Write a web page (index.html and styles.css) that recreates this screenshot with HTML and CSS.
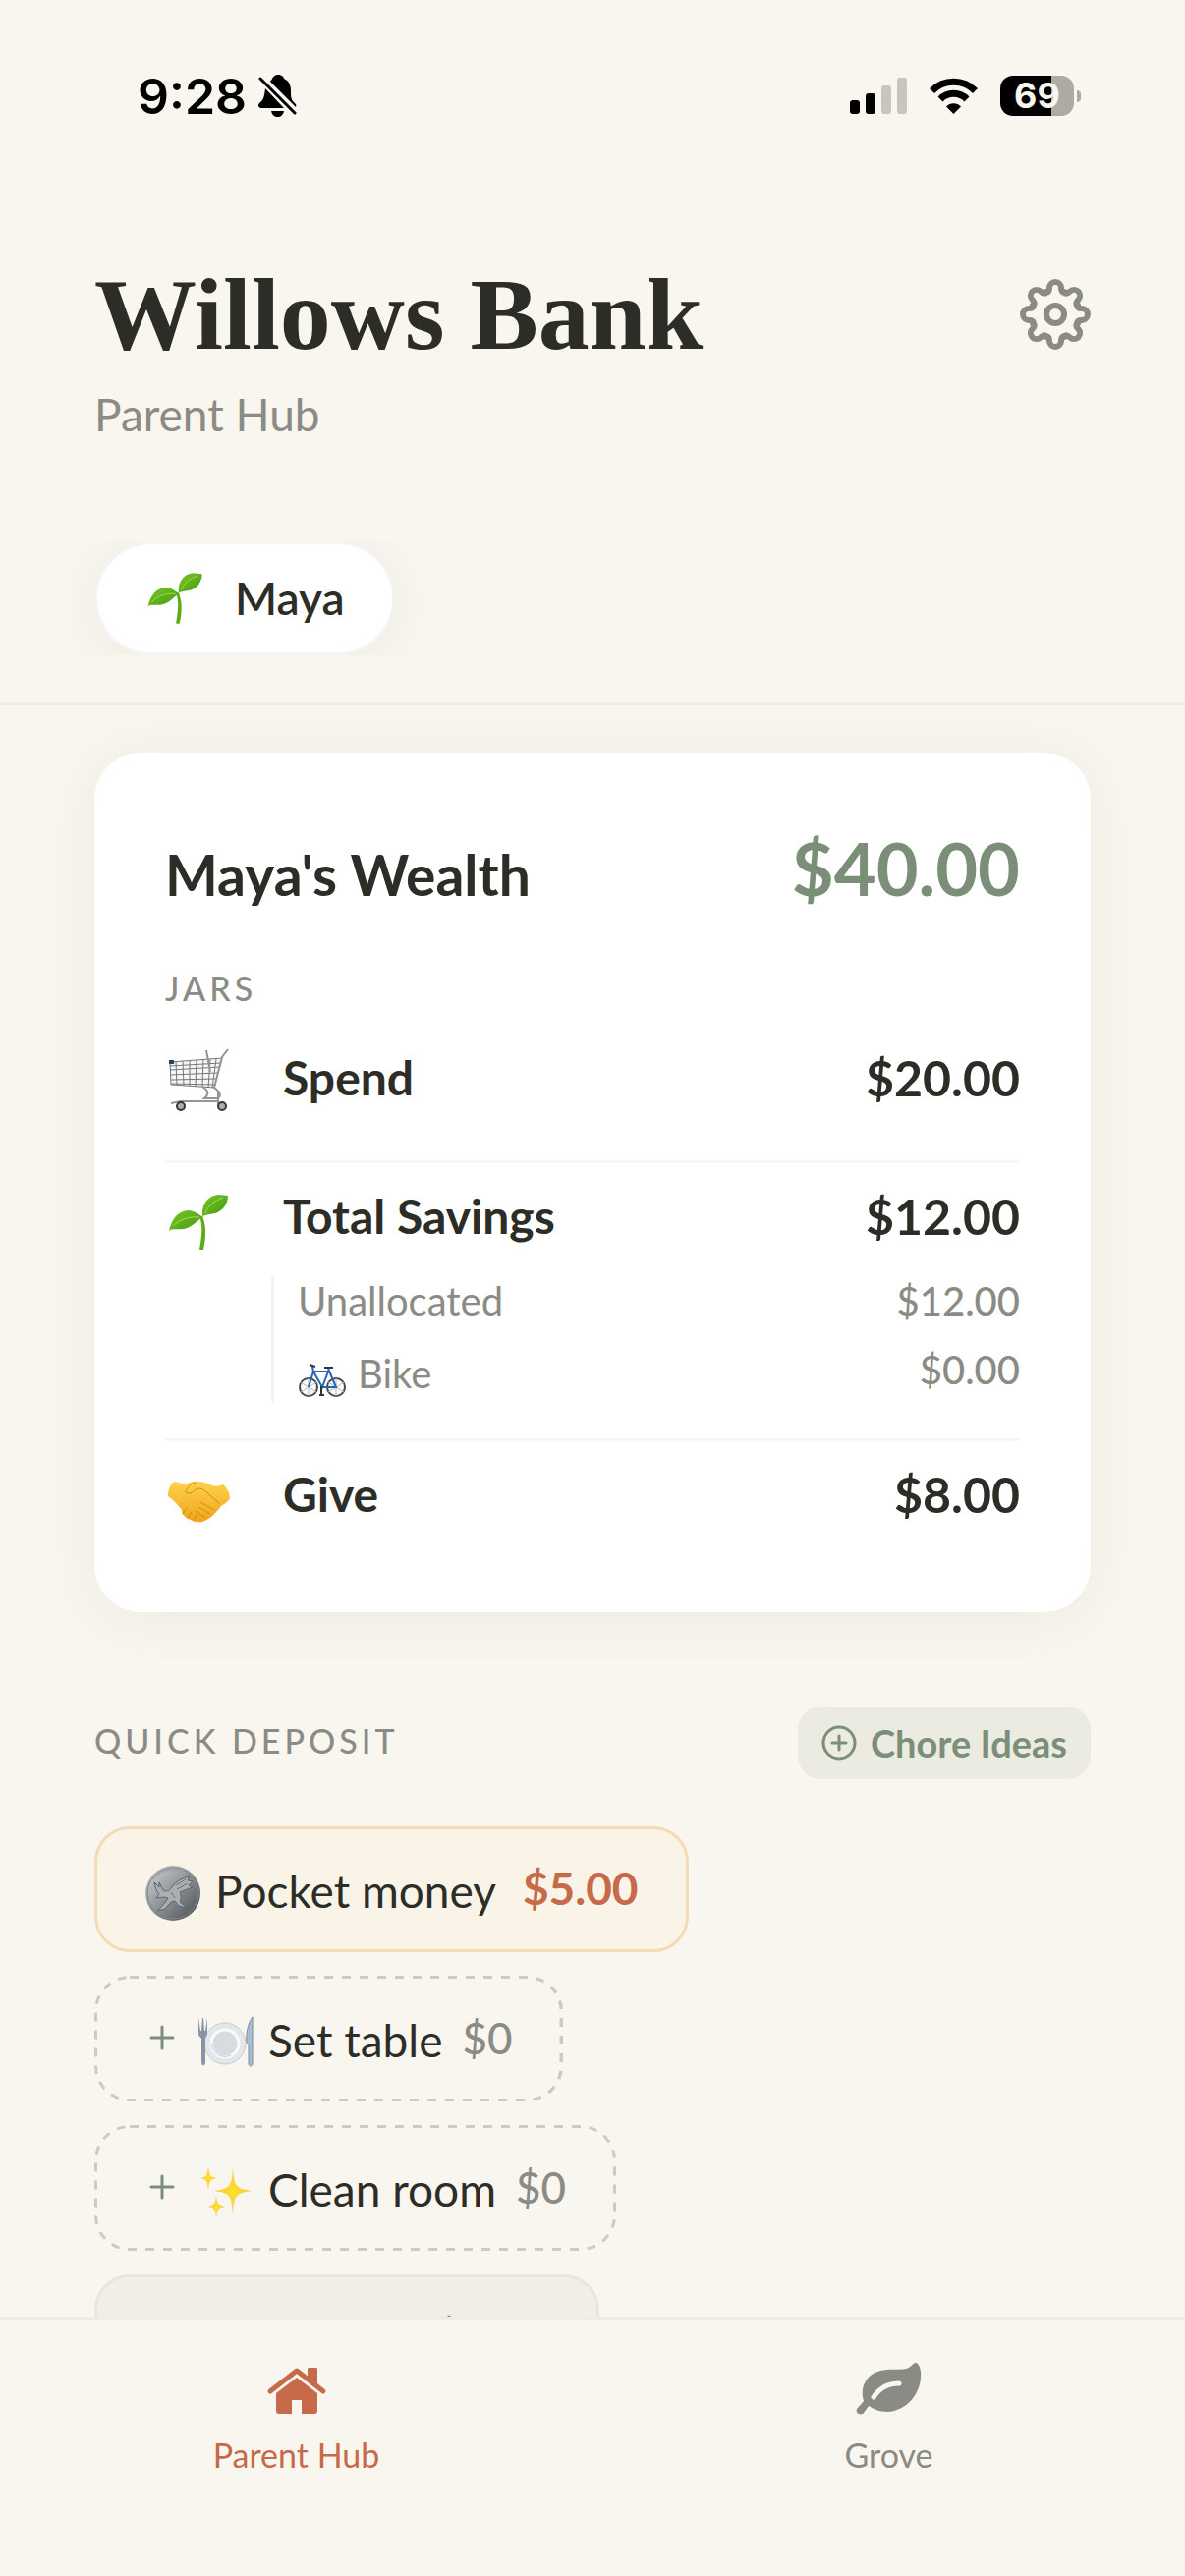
FILE: index.html
```html
<!DOCTYPE html>
<html lang="en">
<head>
<meta charset="utf-8">
<meta name="viewport" content="width=device-width, initial-scale=1">
<title>Willows Bank</title>
<link rel="stylesheet" href="styles.css">
</head>
<body>
<svg class="sprite" aria-hidden="true">
  <defs>
    <linearGradient id="leaf-green" x1="0" y1="0" x2="1" y2="1">
      <stop offset="0" stop-color="#7cc62a"/><stop offset="1" stop-color="#3f9a0c"/>
    </linearGradient>
    <linearGradient id="hand-gold" x1="0" y1="0" x2="0" y2="1">
      <stop offset="0" stop-color="#ffd24a"/><stop offset="1" stop-color="#efa41c"/>
    </linearGradient>
    <linearGradient id="coin-silver" x1="0" y1="0" x2="1" y2="1">
      <stop offset="0" stop-color="#d3d8da"/><stop offset="0.5" stop-color="#8c9295"/><stop offset="1" stop-color="#43484b"/>
    </linearGradient>
    <radialGradient id="spark-gold">
      <stop offset="0" stop-color="#ffe02e"/><stop offset="0.6" stop-color="#ffcf3a"/><stop offset="1" stop-color="#fbb05a"/>
    </radialGradient>
    <symbol id="sprout" viewBox="0 0 72 72">
      <path d="M4 45C7 32 13 25 23 24C30 24 34 28 39 31C33 33 29 41 19 43C12 44 7 42 4 45Z" fill="url(#leaf-green)"/>
      <path d="M38 30C37 17 44 9 54 8L64 9C64 18 58 25 51 27C45 28 40 29 38 30Z" fill="url(#leaf-green)"/>
      <path d="M38 30C42 40 42 50 39 64H35C37 52 39 40 35 30Z" fill="#5aad17"/>
      <path d="M8 40C15 33 24 30 35 31M41 27C44 19 50 14 59 11" fill="none" stroke="#a5dc55" stroke-width="1"/>
    </symbol>
  </defs>
</svg>
<div class="app">
  <div class="status">
    <div class="status-left">
      <span class="clock">9:28</span>
      <svg class="bell" viewBox="0 0 40 43" aria-label="Silent mode">
        <path d="M20 0C23 0 26 2 26 4C31 6 33 11 33 16C33 22 33 25 36 28C38 30 39 31 38 33L12 7C13 5 14 5 14 4C15 2 17 0 20 0Z"/>
        <path d="M7 14L26 34H3C0 34 -1 31 1 29C5 26 6 23 7 14Z"/>
        <path d="M13 37H26C25 41 23 43 20 43C16 43 14 41 13 37Z"/>
        <path d="M2 4L37 39" stroke="#000" stroke-width="3" stroke-linecap="round"/>
      </svg>
    </div>
    <div class="status-right">
      <svg class="signal" viewBox="0 0 58 37" aria-label="Signal">
        <rect x="0" y="23" width="10" height="14" rx="3"/>
        <rect x="16" y="16" width="10" height="21" rx="3"/>
        <rect x="32" y="8" width="10" height="29" rx="3" fill="#c8c5bf"/>
        <rect x="48" y="0" width="10" height="37" rx="3" fill="#c8c5bf"/>
      </svg>
      <svg class="wifi" viewBox="0 0 50 37" aria-label="Wi-Fi">
        <path d="M3 13.500A31 31 0 0 1 47 13.500" fill="none" stroke="#000" stroke-width="7"/>
        <path d="M11.500 22A19 19 0 0 1 38.500 22" fill="none" stroke="#000" stroke-width="7"/>
        <path d="M17.500 29.500C21 25 29 25 32.500 29.500L25 37Z"/>
      </svg>
      <div class="battery"><span class="battery-level">69</span><span class="battery-tip"></span></div>
    </div>
  </div>

  <header class="header">
    <div class="title-row">
      <h1 class="title">Willows Bank</h1>
      <button class="icon-button" type="button" aria-label="Settings">
        <svg class="gear" viewBox="0 0 72 72">
          <defs><path id="tooth" d="M26.600 13.300C28.900 14.200 30 12 30 9A6 6 0 0 1 42 9C42 12 43.100 14.200 45.400 13.300"/></defs>
          <g fill="none" stroke="#8a8b84" stroke-width="6" stroke-linecap="round">
            <use href="#tooth"/><use href="#tooth" transform="rotate(45 36 36)"/>
            <use href="#tooth" transform="rotate(90 36 36)"/><use href="#tooth" transform="rotate(135 36 36)"/>
            <use href="#tooth" transform="rotate(180 36 36)"/><use href="#tooth" transform="rotate(225 36 36)"/>
            <use href="#tooth" transform="rotate(270 36 36)"/><use href="#tooth" transform="rotate(315 36 36)"/>
            <circle cx="36" cy="36" r="9"/>
          </g>
        </svg>
      </button>
    </div>
    <p class="subtitle">Parent Hub</p>
    <div class="children">
      <button class="child" type="button"><svg class="child-icon"><use href="#sprout"/></svg>Maya</button>
    </div>
  </header>

  <main class="content">
    <section class="card">
      <div class="card-head">
        <h2 class="card-title">Maya's Wealth</h2>
        <span class="total">$40.00</span>
      </div>
      <h3 class="label">JARS</h3>
      <ul class="jars">
        <li class="jar">
          <div class="jar-row">
            <svg class="jar-icon" viewBox="0 0 72 72" aria-hidden="true">
              <g fill="none" stroke="#77787b" stroke-width="1">
                <path d="M5 14L58 10L50 40L6 37Z" fill="#f6f6f7"/>
                <path d="M5 18L57 15M5 22L56 19M5 27L54 25M6 32L52 31M6 36L51 37M11 14L12 37M18 13L19 38M25 12L25 38M32 12L31 39M39 11L38 39M46 11L44 40M52 11L48 40"/>
              </g>
              <path d="M42 2L46 24M64 1L58 9L50 40C56 44 58 49 53 51H40C46 46 43 42 38 39M54 44V57M6 56L16 54H54" fill="none" stroke="#949598" stroke-width="2"/>
              <path d="M4 12H9V16H4Z" fill="#24435c"/>
              <circle cx="16" cy="59" r="4" fill="#b5aaa6" stroke="#37343a" stroke-width="2"/>
              <circle cx="58" cy="59" r="4" fill="#b5aaa6" stroke="#37343a" stroke-width="2"/>
            </svg>
            <span class="jar-name">Spend</span>
            <span class="jar-amount">$20.00</span>
          </div>
        </li>
        <li class="jar">
          <div class="jar-row">
            <svg class="jar-icon" aria-hidden="true"><use href="#sprout"/></svg>
            <span class="jar-name">Total Savings</span>
            <span class="jar-amount">$12.00</span>
          </div>
          <ul class="goals">
            <li class="goal"><span class="goal-name">Unallocated</span><span class="goal-amount">$12.00</span></li>
            <li class="goal">
              <span class="goal-name goal-tall">
                <svg class="bike" viewBox="0 0 51 51" aria-hidden="true">
                  <g fill="#fafafa" stroke="#45474a" stroke-width="2"><circle cx="11" cy="38" r="9"/><circle cx="39" cy="38" r="9"/></g>
                  <path d="M3 33L19 43M3 43L19 33M11 29V47M31 33L47 43M31 43L47 33M39 29V47" stroke="#b9babd" stroke-width="1"/>
                  <path d="M11 38L16 22H31L25 38L16 22M25 38H39L31 19M16 22L15 17" fill="none" stroke="#2466b8" stroke-width="2"/>
                  <path d="M12 15L18 17M27 18H36M24 37V46M22 46H27" fill="none" stroke="#333" stroke-width="2"/>
                </svg>
                Bike
              </span>
              <span class="goal-amount">$0.00</span>
            </li>
          </ul>
        </li>
        <li class="jar">
          <div class="jar-row">
            <svg class="jar-icon" viewBox="0 0 72 72" aria-hidden="true">
              <path d="M3 32C3 24 6 18 10 17C15 18 18 20 22 19C30 15 38 17 44 19C50 23 54 22 59 20C63 23 66 29 66 34C64 38 60 40 57 42C52 49 46 55 38 58C32 59 27 57 24 55C19 53 17 49 17 46C13 41 9 36 3 32Z" fill="url(#hand-gold)"/>
              <path d="M31 18C27 18 22 24 21 27C21 30 26 30 30 26C34 23 38 24 41 27L55 39M36 38L50 46M34 43L46 50M31 47L41 54M22 44L18 50M27 48L23 54M32 51L29 57" fill="none" stroke="#d08c18" stroke-width="1" stroke-linecap="round"/>
            </svg>
            <span class="jar-name">Give</span>
            <span class="jar-amount">$8.00</span>
          </div>
        </li>
      </ul>
    </section>

    <section class="deposit">
      <div class="deposit-head">
        <h2 class="label">QUICK DEPOSIT</h2>
        <button class="ideas" type="button">
          <svg class="ideas-icon" viewBox="0 0 36 36" aria-hidden="true"><g fill="none" stroke="#7b8e78" stroke-width="3" stroke-linecap="round"><circle cx="18" cy="18" r="16"/><path d="M18 11V25M11 18H25"/></g></svg>
          Chore Ideas
        </button>
      </div>
      <div class="chips">
        <button class="chip chip-active" type="button">
          <svg class="chip-icon" viewBox="0 0 57 66" aria-hidden="true">
            <circle cx="29" cy="35" r="28" fill="url(#coin-silver)"/>
            <circle cx="29" cy="35" r="26" fill="none" stroke="#7c8285" stroke-width="1"/>
            <path d="M8 21C15 11 28 8 41 13" fill="none" stroke="#9ba1a4" stroke-width="3" stroke-dasharray="3 1"/>
            <path d="M15 36C12 33 11 29 10 24L15 29L15 24L19 32C22 34 25 33 28 29C32 23 38 20 46 18L44 22L49 23L45 27L49 29L41 32L36 34C38 38 37 42 36 44L43 50L35 48L31 43L27 44L21 51L13 53L20 46L24 40L20 39L12 40Z" fill="#a9afb2" stroke="#5e6468" stroke-width="1"/>
            <path d="M32 27L42 21M33 31L44 25M27 34L31 40" stroke="#6c7276" stroke-width="1"/>
          </svg>
          <span class="chip-name">Pocket money</span>
          <span class="chip-price">$5.00</span>
        </button>
        <button class="chip chip-dashed" type="button">
          <svg class="dashes" aria-hidden="true"><rect width="100%" height="100%" rx="36"/></svg>
          <svg class="plus" viewBox="0 0 36 60" aria-hidden="true"><path d="M7 30H29M18 19V41" stroke="#7b8e78" stroke-width="3" stroke-linecap="round"/></svg>
          <svg class="chip-icon" viewBox="0 0 57 66" aria-hidden="true">
            <circle cx="28" cy="36" r="21" fill="#e4e6e8" stroke="#c9cdd1" stroke-width="1"/>
            <circle cx="28" cy="36" r="14" fill="#d9dcde" stroke="#f8fafb" stroke-width="3"/>
            <path d="M14 36A14 14 0 0 0 34 48" fill="none" stroke="#b9d0e6" stroke-width="1"/>
            <path d="M1 10V25C1 29 3 29 4 31V54C4 60 8 60 8 54V31C8 29 10 29 10 25V10L8 23H7L6 10H5L4 23H3Z" fill="#8795a5"/>
            <path d="M56 9C51 15 49 28 50 35L52 37V56C52 60 56 60 56 56Z" fill="#a9bed2" stroke="#7d8c9c" stroke-width="1"/>
          </svg>
          <span class="chip-name">Set table</span>
          <span class="chip-price chip-price-muted">$0</span>
        </button>
        <button class="chip chip-dashed" type="button">
          <svg class="dashes" aria-hidden="true"><rect width="100%" height="100%" rx="36"/></svg>
          <svg class="plus" viewBox="0 0 36 60" aria-hidden="true"><path d="M7 30H29M18 19V41" stroke="#7b8e78" stroke-width="3" stroke-linecap="round"/></svg>
          <svg class="chip-icon" viewBox="0 0 57 66" aria-hidden="true">
            <g fill="url(#spark-gold)">
              <path d="M36 10C37 29 39 32 56 34C39 36 37 39 36 59C35 39 33 36 17 34C33 32 35 29 36 10Z"/>
              <path d="M11 9C12 18 13 20 20 21C13 22 12 24 11 33C10 24 9 22 3 21C9 20 10 18 11 9Z"/>
              <path d="M19 39C20 47 21 48 28 50C21 51 20 53 19 61C18 53 17 51 11 50C17 48 18 47 19 39Z"/>
            </g>
          </svg>
          <span class="chip-name">Clean room</span>
          <span class="chip-price chip-price-muted">$0</span>
        </button>
        <button class="chip chip-done" type="button">
          <span class="chip-price chip-price-done">$5.00</span>
        </button>
      </div>
    </section>
  </main>

  <nav class="tabs">
    <a class="tab tab-active" href="#hub">
      <svg class="tab-icon" viewBox="0 0 72 72" aria-hidden="true">
        <path d="M47 26V14C47 13 48 13 49 13H55C56 13 57 13 57 14V33Z"/>
        <path d="M9 37L36 16L63 37" fill="none" stroke="currentColor" stroke-width="5" stroke-linejoin="round" stroke-linecap="round"/>
        <path d="M36 23L57 39V57C57 59 56 60 54 60H41V46H31V60H18C16 60 15 59 15 57V39Z"/>
      </svg>
      Parent Hub
    </a>
    <a class="tab" href="#grove">
      <svg class="tab-icon" viewBox="0 0 72 72" aria-hidden="true">
        <path d="M63 8C66 8 69 15 68 23C67 40 54 57 34 58C26 58 20 55 15 52L10 59C8 62 1 60 3 55L10 47C7 37 9 27 18 20C30 12 43 16 53 14C58 13 60 8 63 8Z"/>
        <path d="M20 43C26 34 34 29 46 29" fill="none" stroke="#f9f6ef" stroke-width="5" stroke-linecap="round"/>
      </svg>
      Grove
    </a>
  </nav>
</div>
</body>
</html>
```
FILE: styles.css
```css
:root {
  --bg: #f9f6ef;
  --ink: #2d2d28;
  --muted: #8a8b84;
  --sage: #7b8e78;
  --clay: #c66a4a;
}

* { box-sizing: border-box; }

body {
  margin: 0;
  background: var(--bg);
  color: var(--ink);
  font-family: Lato, "Open Sans", sans-serif;
  font-size: 46px;
  line-height: 60px;
}

h1, h2, h3, p, ul { margin: 0; padding: 0; }
ul { list-style: none; }
svg { display: block; flex: none; }
button { font: inherit; color: inherit; border: 0; background: none; padding: 0; cursor: pointer; }

.sprite { position: absolute; width: 0; height: 0; }

.app { display: flex; flex-direction: column; height: 100vh; }

/* Status bar */
.status {
  display: flex;
  justify-content: space-between;
  align-items: center;
  height: 195px;
  padding: 0 106px 0 140px;
  color: #000;
  flex: none;
}
.status-left, .status-right { display: flex; align-items: center; }
.status-left { gap: 12px; }
.status-right { gap: 22px; }
.clock { font: 600 50px/60px Inter, sans-serif; }
.bell { width: 40px; height: 43px; }
.signal { width: 58px; height: 37px; }
.wifi { width: 51px; height: 37px; }
.battery { display: flex; align-items: center; gap: 3px; }
.battery-level {
  width: 75px;
  height: 41px;
  border-radius: 13px;
  background: linear-gradient(90deg, #000 69%, #adaba6 69%);
  color: var(--bg);
  font: 700 36px/41px Inter, sans-serif;
  text-align: center;
}
.battery-tip { width: 4px; height: 12px; border-radius: 0 4px 4px 0; background: #adaba6; }

/* Header */
.header { padding: 65px 0 48px; border-bottom: 3px solid #edebe6; flex: none; }
.title-row { display: flex; justify-content: space-between; align-items: center; padding: 0 96px; }
.title { font: 700 104px/120px "Liberation Serif", serif; }
.icon-button, .gear { width: 72px; height: 72px; }
.subtitle { padding: 0 96px; margin-top: 12px; color: var(--muted); }
.children { display: flex; margin-top: 99px; padding: 0 96px; overflow: hidden; }
.child {
  display: flex;
  align-items: center;
  gap: 26px;
  height: 116px;
  padding: 0 48px;
  border: 3px solid #f4f4f5;
  border-radius: 58px;
  background: #fff;
  box-shadow: 0 6px 48px rgba(45, 45, 40, 0.06);
  font-weight: 600;
}
.child-icon { width: 66px; height: 66px; }

/* Content */
.content { flex: 1; min-height: 0; overflow: hidden; padding: 48px 96px 0; }
.card {
  padding: 70px 72px 72px;
  border-radius: 48px;
  background: #fff;
  box-shadow: 0 6px 60px rgba(45, 45, 40, 0.06);
}
.card-head { display: flex; justify-content: space-between; align-items: baseline; }
.card-title { font-size: 57px; line-height: 72px; font-weight: 700; }
.total { font-size: 74px; line-height: 96px; font-weight: 700; color: var(--sage); }
.label { font-size: 34px; line-height: 44px; font-weight: 500; letter-spacing: 4px; color: var(--muted); }
.card .label { margin-top: 52px; margin-bottom: 15px; }
.deposit-head .label { padding-bottom: 4px; }

.jar { padding: 24px 0 36px; border-bottom: 3px solid #f7f7f7; }
.jar:last-child { padding-bottom: 0; border-bottom: 0; }
.jar-row { display: flex; align-items: flex-start; min-height: 78px; }
.jar-icon { width: 72px; height: 72px; margin-right: 48px; }
.jar-name { flex: 1; font-size: 48px; font-weight: 700; }
.jar-amount { font-size: 50px; font-weight: 700; }

.goals {
  display: flex;
  flex-direction: column;
  gap: 18px;
  margin: 12px 0 0 108px;
  padding-left: 24px;
  border-left: 3px solid #f4f4f4;
  color: var(--muted);
  font-size: 40px;
  line-height: 52px;
}
.goal { display: flex; justify-content: space-between; }
.goal-name { display: flex; gap: 10px; }
.goal-tall { line-height: 60px; }
.goal-amount { font-weight: 500; }
.bike { width: 51px; height: 51px; margin-top: 6px; }

/* Quick deposit */
.deposit { margin-top: 96px; }
.deposit-head { display: flex; justify-content: space-between; align-items: center; }
.ideas {
  display: flex;
  align-items: center;
  gap: 14px;
  height: 74px;
  padding: 0 24px;
  border-radius: 24px;
  background: #ebebe2;
  color: var(--sage);
  font-size: 38px;
  line-height: 70px;
  font-weight: 700;
}
.ideas-icon { width: 36px; height: 36px; }
.chips { display: flex; flex-direction: column; align-items: flex-start; gap: 24px; margin-top: 48px; }
.chip {
  position: relative;
  display: flex;
  align-items: flex-start;
  height: 128px;
  padding: 30px 48px 0;
  border: 3px solid #f2dcb4;
  border-radius: 36px;
}
.chip-active { background: #faf4e8; }
.chip-dashed { border-color: transparent; }
.chip-done { border-color: #e7e6e1; background: #f1eee7; width: 514px; justify-content: flex-end; }

/* The outer half of the stroke is clipped, leaving a 3px dashed outline. */
.dashes {
  position: absolute;
  inset: -3px;
  width: calc(100% + 6px);
  height: calc(100% + 6px);
  border-radius: 36px;
  overflow: hidden;
}
.dashes rect { fill: none; stroke: #cbcac4; stroke-width: 6px; stroke-dasharray: 9 9; }

.plus { width: 36px; height: 60px; margin-right: 18px; }
.chip-icon { width: 57px; height: 66px; margin-right: 15px; }
.chip-name { line-height: 66px; }
.chip-price { margin-left: 27px; font-weight: 700; color: var(--clay); }
.chip-price-muted { margin-left: 20px; font-size: 44px; font-weight: 500; color: var(--muted); }
.chip-price-done { color: var(--muted); }

/* Tab bar */
.tabs { display: flex; flex: none; height: 264px; padding-top: 36px; border-top: 3px solid #efece5; background: var(--bg); }
.tab {
  flex: 1;
  display: flex;
  flex-direction: column;
  align-items: center;
  gap: 8px;
  color: var(--muted);
  font-size: 34px;
  line-height: 44px;
  text-decoration: none;
}
.tab-active { color: var(--clay); }
.tab-icon { width: 72px; height: 72px; fill: currentColor; }
```
